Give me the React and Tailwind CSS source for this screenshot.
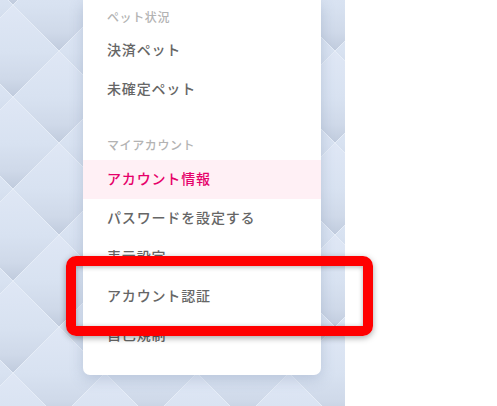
const menuFont = "font-['Noto_Sans_CJK_JP','Noto_Sans',sans-serif]";

function Diamond({ x = 0, y = 0 }) {
  return <path transform={`translate(${x},${y})`} d="M46 0L92 46L46 92L0 46Z" fill="url(#quilt)" />;
}

function Backdrop() {
  return (
    <svg className="absolute inset-0 h-full w-full" aria-hidden="true">
      <defs>
        <linearGradient id="quilt" x1="0" y1="0" x2="0" y2="1">
          <stop offset="0" stopColor="#dfe7f5" />
          <stop offset="0.5" stopColor="#d8e2f1" />
          <stop offset="0.8" stopColor="#cfd9e9" />
          <stop offset="1" stopColor="#c0cbdd" />
        </linearGradient>
        <pattern id="tile" x="13" y="51" width="92" height="92" patternUnits="userSpaceOnUse">
          <Diamond x={-46} y={-46} />
          <Diamond x={46} y={-46} />
          <Diamond x={-46} y={46} />
          <Diamond x={46} y={46} />
          <Diamond />
          <path d="M46 0L92 46L46 92L0 46Z" fill="none" stroke="#e6edf7" strokeWidth="1" />
        </pattern>
      </defs>
      <rect width="100%" height="100%" fill="url(#tile)" />
    </svg>
  );
}

function MenuItem({ label, active }) {
  return (
    <li
      className={
        active
          ? "flex h-[39px] items-center bg-[#fff0f5] pb-1 pl-6 text-[#e6006a]"
          : "flex h-[39px] items-center pb-1 pl-6 text-[#666666]"
      }
    >
      {label}
    </li>
  );
}

export default function App() {
  return (
    <div className={`flex h-[406px] w-[497px] overflow-hidden bg-white ${menuFont}`}>
      <div className="relative h-full w-[345px] overflow-hidden">
        <Backdrop />
        <div className="relative ml-[83px] h-[375px] w-[238px] rounded-b-[7px] bg-white text-sm font-medium tracking-[0.06em] shadow-[0_4px_14px_rgba(90,110,150,0.25)]">
          <p className="pl-6 pt-[8px] text-xs leading-[18px] tracking-[0.05em] text-[#b3b3b3]">ペット状況</p>
          <ul className="mt-[5px]">
            <MenuItem label="決済ペット" />
            <MenuItem label="未確定ペット" />
          </ul>
          <p className="mt-[27px] pl-6 text-xs leading-[18px] tracking-[0.05em] text-[#b3b3b3]">マイアカウント</p>
          <ul className="mt-[6px]">
            <MenuItem label="アカウント情報" active />
            <MenuItem label="パスワードを設定する" />
            <MenuItem label="表示設定" />
            <MenuItem label="アカウント認証" />
            <MenuItem label="自己規制" />
          </ul>
        </div>
      </div>
      {/* annotation drawn over the screenshot */}
      <div className="absolute left-[66px] top-[256px] h-[80px] w-[307px] rounded-[10px] border-[10px] border-[#ff0000] shadow-[0_2px_6px_rgba(0,0,0,0.35),inset_0_1px_5px_rgba(0,0,0,0.3)]" />
    </div>
  );
}
